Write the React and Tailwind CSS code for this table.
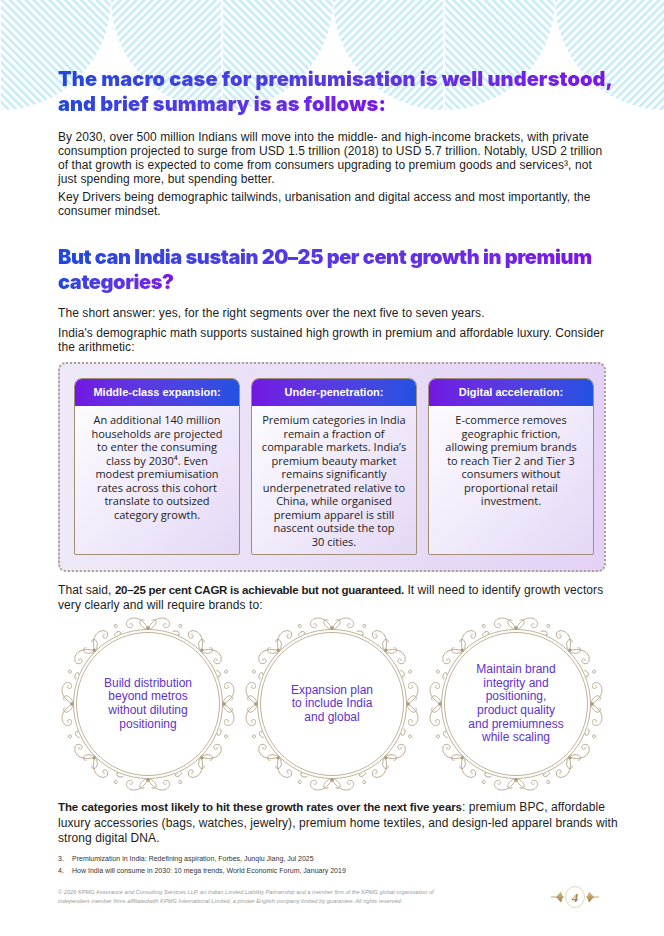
import React from "react";

const SANS = { fontFamily: '"Liberation Sans", Arial, sans-serif' };
const HEAD = { fontFamily: 'Inter, "Liberation Sans", sans-serif' };
const CARD = { fontFamily: '"Open Sans", "Noto Sans", sans-serif' };

function BgPattern() {
  const centers = [0, 222, 444, 666];
  const R = 110;
  return (
    <svg className="absolute left-0 top-0" width="664" height="130" viewBox="0 0 664 130">
      <defs>
        <pattern id="hA" patternUnits="userSpaceOnUse" width="5.6" height="5.6" patternTransform="rotate(45)">
          <rect x="0" y="0" width="2.7" height="5.6" fill="#c9edf6" />
        </pattern>
        <pattern id="hB" patternUnits="userSpaceOnUse" width="5.6" height="5.6" patternTransform="rotate(-45)">
          <rect x="0" y="0" width="2.7" height="5.6" fill="#c9edf6" />
        </pattern>
      </defs>
      {centers.map((cx) => (
        <g key={cx}>
          <path d={`M ${cx - 0.9} ${-R} A ${R} ${R} 0 0 0 ${cx - 0.9} ${R} Z`} fill="url(#hA)" />
          <path d={`M ${cx + 0.9} ${-R} A ${R} ${R} 0 0 1 ${cx + 0.9} ${R} Z`} fill="url(#hB)" />
        </g>
      ))}
    </svg>
  );
}

function GradText({ children }) {
  return (
    <span className="box-decoration-clone bg-gradient-to-r from-[#1f47e0] to-[#7a14e9] bg-clip-text text-transparent">
      {children}
    </span>
  );
}

function Ornament() {
  const main = [0, 45, 90, 135, 180, 225, 270, 315];
  const scroll =
    "M0 -75.5 C -3 -81 -8 -86 -14 -86 C -20 -86 -23 -81 -21 -78 C -19 -75.5 -15.5 -76 -15.5 -78.5 C -15.5 -80.5 -17.5 -81 -18.5 -79.5";
  const scroll2 = "M -2 -75 C -6 -77 -9 -80 -8 -83 C -7 -85 -4 -85 -4 -83";
  return (
    <svg viewBox="-88 -88 176 176" width="176" height="176" className="absolute left-0 top-0">
      <g fill="none" stroke="#ab9877" strokeWidth="0.75">
        <circle r="74.5" />
        <circle r="71.5" />
        {main.map((a) => (
          <g key={a} transform={`rotate(${a})`}>
            <path d={scroll} />
            <path d={scroll} transform="scale(-1,1)" />
            <path d={scroll2} />
            <path d={scroll2} transform="scale(-1,1)" />
            <circle cx="0" cy="-76" r="1.4" fill="#ab9877" />
          </g>
        ))}
        {main.map((a) => (
          <g key={"b" + a} transform={`rotate(${a + 22.5})`}>
            <circle cx="0" cy="-84.5" r="1.5" />
            <path d="M -5 -76 C -3 -79 1 -79 2 -77 C 3 -75.5 1 -75 0.5 -76" />
          </g>
        ))}
      </g>
    </svg>
  );
}

function Circle({ lines }) {
  return (
    <div className="relative w-[176px] h-[176px] flex items-center justify-center">
      <Ornament />
      <div className="relative text-center text-[12px] leading-[13.6px] text-[#6131c9]" style={SANS}>
        {lines.map((l, i) => (
          <div key={i}>{l}</div>
        ))}
      </div>
    </div>
  );
}

function Card({ title, lines }) {
  return (
    <div className="w-[166px] h-[177px] rounded-t-[8px] rounded-b-[2px] border border-[#a08f72] overflow-hidden flex flex-col bg-gradient-to-br from-white to-[#e4d8f6]">
      <div
        className="h-[27px] flex items-center justify-center bg-gradient-to-r from-[#7216e2] to-[#1f52e1] text-white font-bold text-[11px]"
        style={SANS}
      >
        {title}
      </div>
      <div className="pt-[7px] text-center text-[11px] leading-[13.5px] text-[#222]" style={CARD}>
        {lines.map((l, i) => (
          <div key={i} className="whitespace-nowrap">
            {l}
          </div>
        ))}
      </div>
    </div>
  );
}

function Logo() {
  return (
    <svg width="50" height="24" viewBox="0 0 50 24">
      <defs>
        <linearGradient id="gold" x1="0" y1="0" x2="0" y2="1">
          <stop offset="0" stopColor="#d8c38e" />
          <stop offset="1" stopColor="#9c7d3e" />
        </linearGradient>
      </defs>
      <path d="M1 12 L14 12" stroke="#a88a4c" strokeWidth="0.8" />
      <path d="M6 12 L11 6.5 L13 12 L11 17.5 Z" fill="url(#gold)" />
      <path d="M36 12 L49 12" stroke="#a88a4c" strokeWidth="0.8" />
      <path d="M44 12 L39 6.5 L37 12 L39 17.5 Z" fill="url(#gold)" />
      <ellipse cx="25" cy="12" rx="9.5" ry="10.5" fill="#fff" stroke="#cdbb92" strokeWidth="0.6" />
      <text
        x="25"
        y="16.5"
        textAnchor="middle"
        fontSize="13"
        fontStyle="italic"
        fontWeight="bold"
        fill="#a3853f"
        fontFamily="'Liberation Serif', serif"
      >
        4
      </text>
    </svg>
  );
}

const P = "text-[12px] tracking-[0.08px] whitespace-nowrap";

export default function App() {
  return (
    <div className="relative w-[664px] h-[936px] bg-white overflow-hidden text-[#1c1c1c]" style={SANS}>
      <BgPattern />
      <div className="relative px-[58px] flex flex-col">
        <h1 className="pt-[67px] text-[20px] leading-[25px] font-black tracking-[0.1px] whitespace-nowrap" style={HEAD}>
          <GradText>
            The macro case for premiumisation is well understood,
            <br />
            and brief summary is as follows:
          </GradText>
        </h1>

        <p className={`mt-[13px] leading-[14px] ${P}`}>
          By 2030, over 500 million Indians will move into the middle- and high-income brackets, with private
          <br />
          consumption projected to surge from USD 1.5 trillion (2018) to USD 5.7 trillion. Notably, USD 2 trillion
          <br />
          of that growth is expected to come from consumers upgrading to premium goods and services³, not
          <br />
          just spending more, but spending better.
        </p>
        <p className={`mt-[4px] leading-[14px] ${P}`}>
          Key Drivers being demographic tailwinds, urbanisation and digital access and most importantly, the
          <br />
          consumer mindset.
        </p>

        <h2 className="mt-[27px] text-[20px] leading-[25px] font-black tracking-[-0.4px] whitespace-nowrap" style={HEAD}>
          <GradText>
            But can India sustain 20–25 per cent growth in premium
            <br />
            categories?
          </GradText>
        </h2>

        <p className={`mt-[11px] leading-[14px] ${P}`}>
          The short answer: yes, for the right segments over the next five to seven years.
        </p>
        <p className={`mt-[6px] leading-[14px] ${P}`}>
          India's demographic math supports sustained high growth in premium and affordable luxury. Consider
          <br />
          the arithmetic:
        </p>

        <div className="mt-[8px] h-[210px] rounded-[8px] border-2 border-dotted border-[#ad9f92] bg-gradient-to-r from-[#eee9f8] to-[#e3d2f6] flex gap-[11px] pl-[14px] pt-[14px]">
          <Card
            title="Middle-class expansion:"
            lines={[
              "An additional 140 million",
              "households are projected",
              "to enter the consuming",
              "class by 2030⁴. Even",
              "modest premiumisation",
              "rates across this cohort",
              "translate to outsized",
              "category growth.",
            ]}
          />
          <Card
            title="Under-penetration:"
            lines={[
              "Premium categories in India",
              "remain a fraction of",
              "comparable markets. India’s",
              "premium beauty market",
              "remains significantly",
              "underpenetrated relative to",
              "China, while organised",
              "premium apparel is still",
              "nascent outside the top",
              "30 cities.",
            ]}
          />
          <Card
            title="Digital acceleration:"
            lines={[
              "E-commerce removes",
              "geographic friction,",
              "allowing premium brands",
              "to reach Tier 2 and Tier 3",
              "consumers without",
              "proportional retail",
              "investment.",
            ]}
          />
        </div>

        <p className={`mt-[11px] leading-[14.5px] ${P}`}>
          That said, <b className="text-[11.5px] tracking-[-0.25px]">20–25 per cent CAGR is achievable but not guaranteed.</b> It will need to identify growth vectors
          <br />
          very clearly and will require brands to:
        </p>

        <div className="mt-[4px] flex justify-center gap-[8px]">
          <Circle lines={["Build distribution", "beyond metros", "without diluting", "positioning"]} />
          <Circle lines={["Expansion plan", "to include India", "and global"]} />
          <Circle
            lines={[
              "Maintain brand",
              "integrity and",
              "positioning,",
              "product quality",
              "and premiumness",
              "while scaling",
            ]}
          />
        </div>

        <p className={`mt-[8px] leading-[15.5px] ${P}`}>
          <b className="text-[11.5px] tracking-[-0.1px]">The categories most likely to hit these growth rates over the next five years</b>: premium BPC, affordable
          <br />
          luxury accessories (bags, watches, jewelry), premium home textiles, and design-led apparel brands with
          <br />
          strong digital DNA.
        </p>

        <div className="mt-[6px] text-[7px] leading-[12.5px] text-[#333]">
          <div className="flex">
            <span className="w-[14px]">3.</span>
            <span>Premiumization in India: Redefining aspiration, Forbes, Junqiu Jiang, Jul 2025</span>
          </div>
          <div className="flex">
            <span className="w-[14px]">4.</span>
            <span>How India will consume in 2030: 10 mega trends, World Economic Forum, January 2019</span>
          </div>
        </div>

        <div className="mt-[7px] flex items-center justify-between">
          <div className="text-[5.7px] leading-[9px] italic text-[#9a9a9a] whitespace-nowrap">
            © 2026 KPMG Assurance and Consulting Services LLP, an Indian Limited Liability Partnership and a member firm of the KPMG global organisation of
            <br />
            independent member firms affiliatedwith KPMG International Limited, a private English company limited by guarantee. All rights reserved.
          </div>
          <div className="mr-[6px]">
            <Logo />
          </div>
        </div>
      </div>
    </div>
  );
}
